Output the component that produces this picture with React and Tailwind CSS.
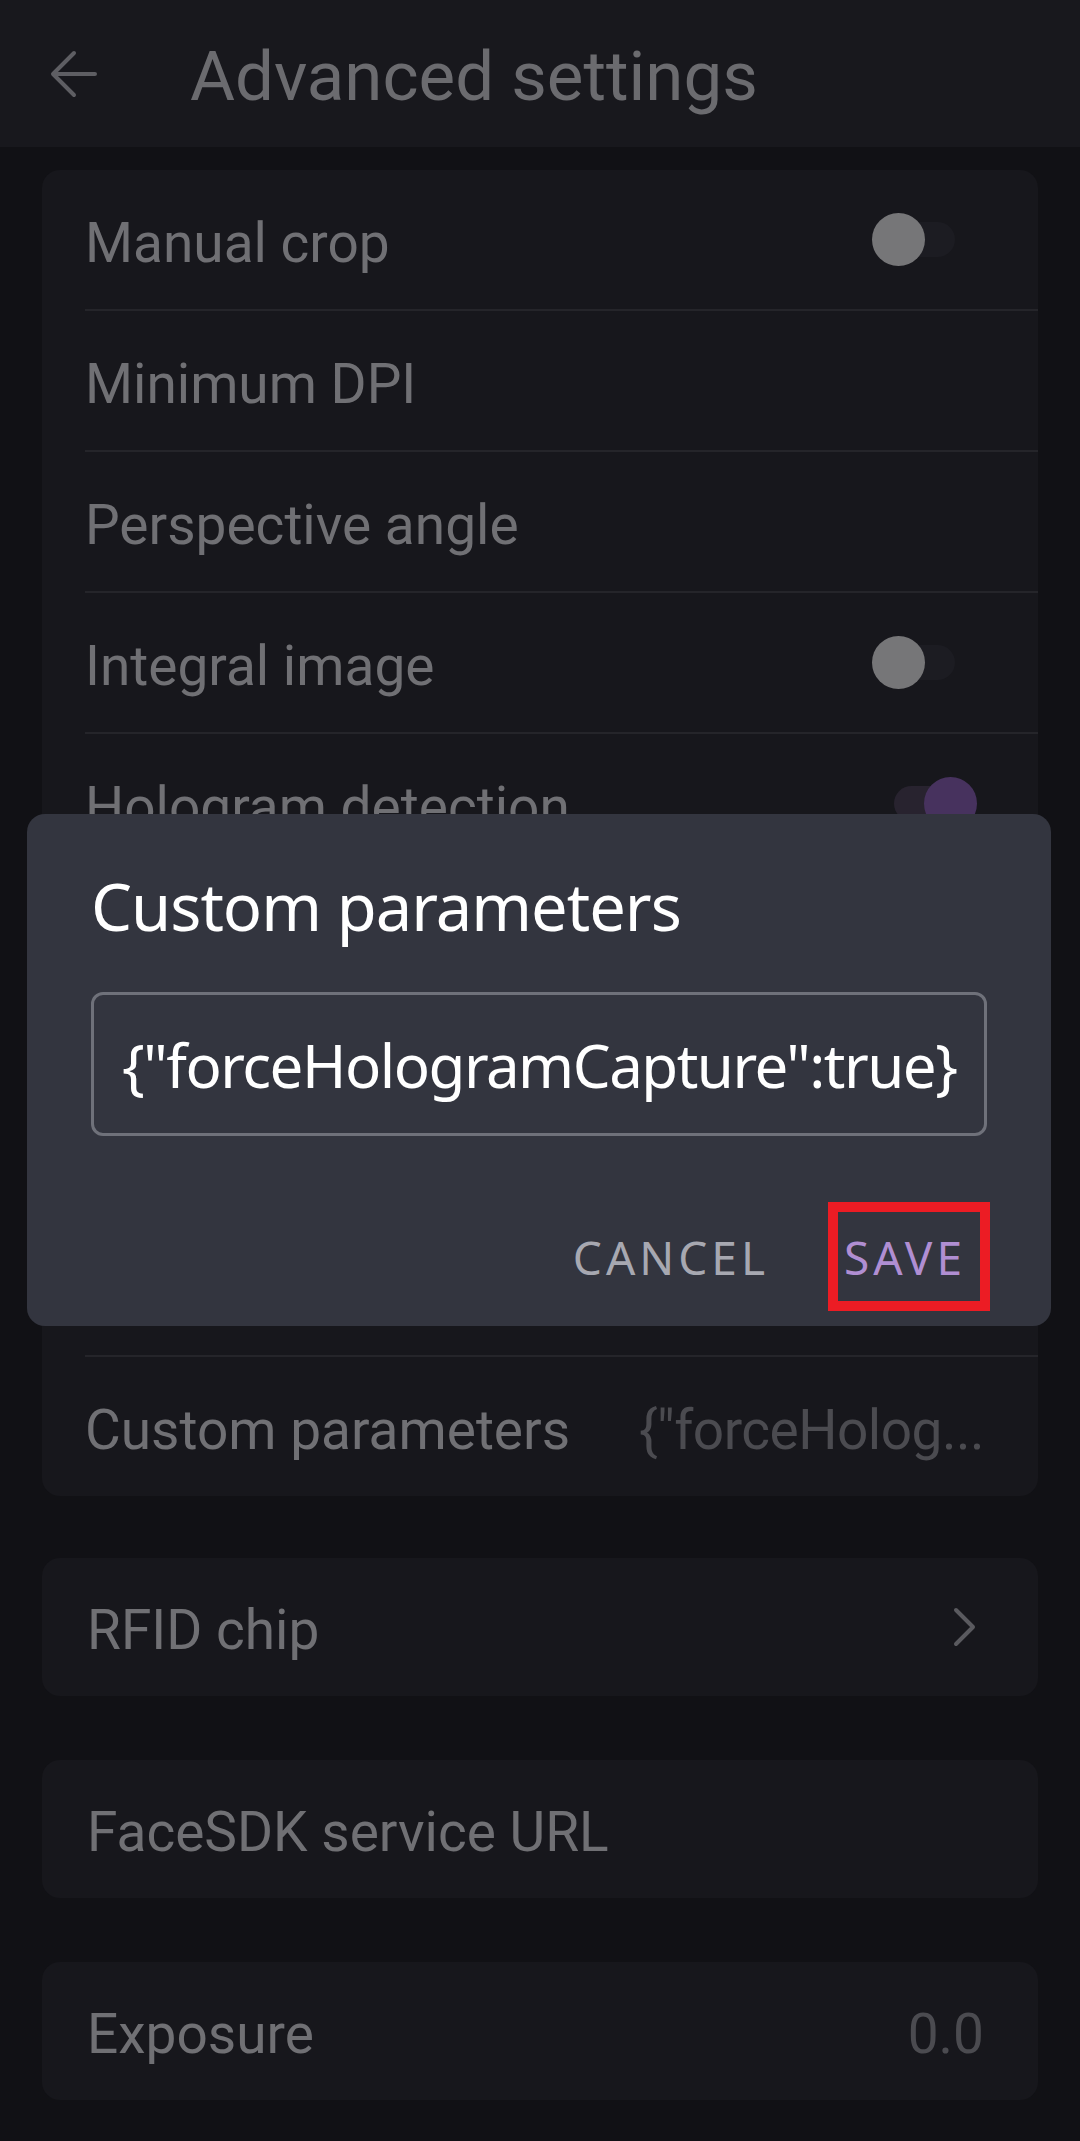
import React from "react";

const Toggle = ({ on }) => (
  <div className="relative w-[105px] h-[53px]">
    <div
      className={`absolute left-[22px] top-[9px] w-[61px] h-[35px] rounded-full ${
        on ? "bg-[#28232f]" : "bg-[#1c1c22]"
      }`}
    />
    <div
      className={`absolute top-0 w-[53px] h-[53px] rounded-full ${
        on ? "right-0 bg-[#47325e]" : "left-0 bg-[#767678]"
      }`}
    />
  </div>
);

const Row = ({ label, right, tall, last }) => (
  <div
    className={`ml-[43px] flex items-center justify-between pr-[61px] ${
      tall ? "h-[200px]" : "h-[141px]"
    } ${last ? "" : "border-b-2 border-[#25252a]"}`}
  >
    <span className="pt-[7px] text-[55px] leading-none text-[#707074]">{label}</span>
    {right}
  </div>
);

const Chevron = () => (
  <svg width="24" height="40" viewBox="0 0 24 40" fill="none">
    <path
      d="M3 3 L20 20 L3 37"
      stroke="#5a5a5f"
      strokeWidth="4"
      strokeLinecap="round"
      strokeLinejoin="round"
    />
  </svg>
);

const SingleCard = ({ label, right, className }) => (
  <div
    className={`h-[138px] rounded-[18px] bg-[#17171c] flex items-center justify-between pl-[45px] ${className}`}
  >
    <span className="pt-[7px] text-[55px] leading-none text-[#707074]">{label}</span>
    {right}
  </div>
);

export default function App() {
  return (
    <div className="relative w-[1080px] min-h-[2141px] bg-[#111115] font-['Roboto',sans-serif] overflow-hidden">
      {/* top bar */}
      <div className="h-[147px] bg-[#18181d] flex items-center">
        <svg className="ml-[50px]" width="47" height="48" viewBox="0 0 47 48" fill="none">
          <path
            d="M45 24 H4 M24 3 L3 24 L24 45"
            stroke="#5e5e63"
            strokeWidth="4"
            strokeLinecap="round"
            strokeLinejoin="round"
          />
        </svg>
        <h1 className="ml-[93px] pt-[6px] text-[69px] leading-none text-[#6b6b6f] font-normal">
          Advanced settings
        </h1>
      </div>

      <div className="px-[42px] pt-[23px] pb-[40px]">
        <div className="rounded-[18px] bg-[#17171c]">
          <Row label="Manual crop" right={<Toggle />} />
          <Row label="Minimum DPI" />
          <Row label="Perspective angle" />
          <Row label="Integral image" right={<Toggle />} />
          <Row label="Hologram detection" right={<Toggle on />} />
          <Row label="Glare detection" right={<Toggle />} />
          <Row label="Timeout" />
          <Row label="Document filter" tall />
          <div className="ml-[43px] h-[139px] flex items-center justify-between pr-[54px]">
            <span className="pt-[7px] text-[55px] leading-none text-[#707074]">Custom parameters</span>
            <span className="pt-[7px] text-[55px] leading-none tracking-[-0.5px] text-[#4b4b50]">
              {'{"forceHolog...'}
            </span>
          </div>
        </div>

        <SingleCard
          className="mt-[62px]"
          label="RFID chip"
          right={
            <div className="mr-[61px]">
              <Chevron />
            </div>
          }
        />
        <SingleCard className="mt-[64px]" label="FaceSDK service URL" />
        <SingleCard
          className="mt-[64px]"
          label="Exposure"
          right={
            <span className="mr-[54px] pt-[7px] text-[55px] leading-none text-[#4b4b50]">0.0</span>
          }
        />
      </div>

      {/* dialog */}
      <div className="absolute left-[27px] top-[814px] w-[1024px] rounded-[18px] bg-[#33353f] px-[64px] pt-[60px] pb-[15px] flex flex-col font-['Noto_Sans',sans-serif]">
        <h2 className="text-[65px] leading-none tracking-[-1px] text-white font-normal">
          Custom parameters
        </h2>
        <div className="mt-[53px] h-[144px] rounded-[12px] border-[3px] border-[#6f717a] flex items-center pl-[28px]">
          <span className="pt-[2px] text-[60px] leading-none tracking-[-1.5px] text-white">
            {'{"forceHologramCapture":true}'}
          </span>
        </div>
        <div className="mt-[66px] flex items-center justify-end gap-[59px] -mr-[3px]">
          <span className="text-[46px] leading-none tracking-[4px] text-[#a7a8b1]">CANCEL</span>
          <div className="w-[162px] h-[109px] border-[10px] border-[#ec1c24] flex items-center pl-[6px]">
            <span className="text-[46px] leading-none tracking-[4px] text-[#b08ed2]">SAVE</span>
          </div>
        </div>
      </div>
    </div>
  );
}
